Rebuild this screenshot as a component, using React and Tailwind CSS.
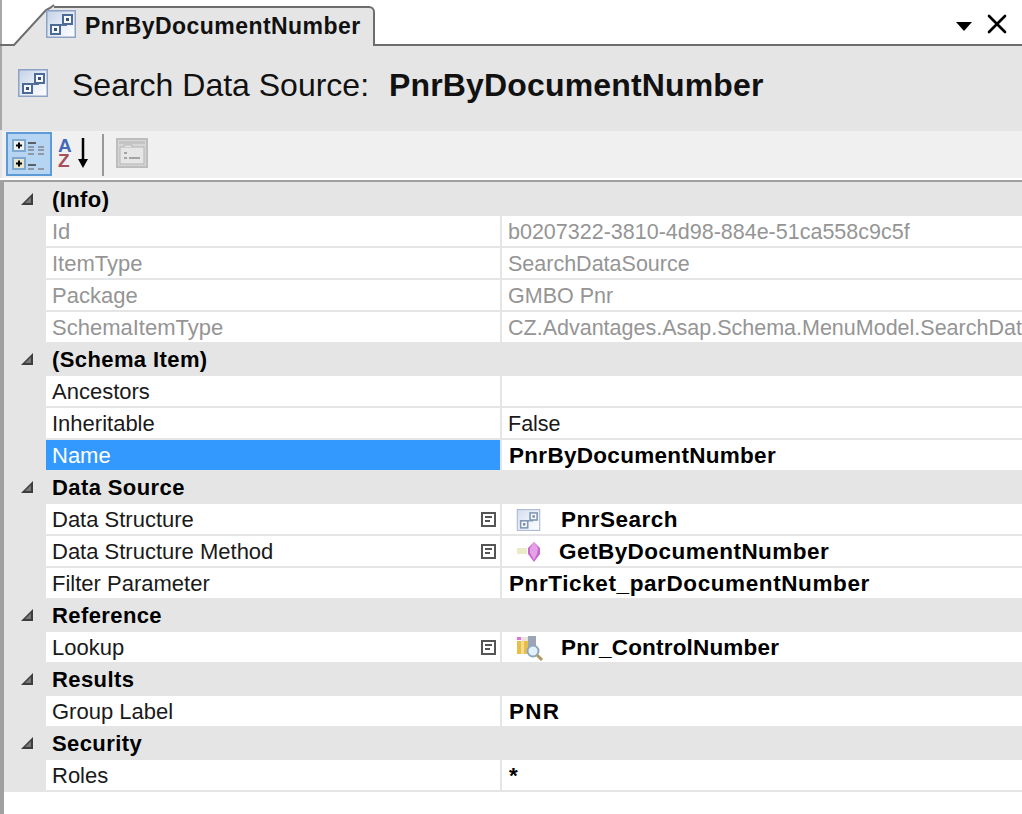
import { X } from 'lucide-react'

const SchemaIcon = ({ small = false }) => (
  <svg
    width={small ? 25 : 30}
    height={small ? 22 : 28}
    viewBox="0 0 30 28"
    className={small ? 'opacity-70 blur-[0.5px] flex-none' : 'flex-none'}
  >
    <defs>
      <linearGradient id="schemaBg" x1="0" y1="0" x2="1" y2="1">
        <stop offset="0" stopColor="#c3d1e6" />
        <stop offset="0.6" stopColor="#e9eff9" />
        <stop offset="1" stopColor="#ffffff" />
      </linearGradient>
    </defs>
    <rect x="0.75" y="0.75" width="28.5" height="26.5" fill="url(#schemaBg)" stroke="#8da2c4" strokeWidth="1.5" />
    <path d="M13 15h7v-2" fill="none" stroke="#5b769e" strokeWidth="2" />
    <rect x="17" y="5" width="9" height="9" fill="#f4f7fc" stroke="#4b6a96" strokeWidth="2" />
    <rect x="20" y="8" width="3" height="3" fill="#3a4f72" />
    <rect x="5" y="15" width="9" height="9" fill="#f4f7fc" stroke="#4b6a96" strokeWidth="2" />
    <rect x="8" y="18" width="3" height="3" fill="#3a4f72" />
  </svg>
)

const MethodIcon = () => (
  <svg width="26" height="22" viewBox="0 0 26 22" className="blur-[0.5px] flex-none">
    <rect x="1" y="7" width="10" height="6" fill="#ecebc8" />
    <path d="M18 1l6 6v6l-6 8-6-8V7z" fill="#c768cc" />
    <path d="M18 1l4 6-1 6-3 6-4-7 0-5z" fill="#e6a0e8" />
  </svg>
)

const LookupIcon = () => (
  <svg width="28" height="26" viewBox="0 0 28 26" className="blur-[0.5px] flex-none">
    <rect x="1" y="6" width="11" height="13" fill="#e9bd4a" />
    <rect x="5" y="6" width="3" height="13" fill="#f4dc8a" />
    <rect x="1" y="2" width="4" height="3" fill="#e070e0" />
    <rect x="5" y="2" width="7" height="4" fill="#e8e4d8" />
    <rect x="12" y="1" width="8" height="15" fill="#9aa5b6" />
    <circle cx="17" cy="16" r="5.5" fill="#e2f2fc" stroke="#8fa6bc" strokeWidth="2" />
    <path d="M21 20l5 5" stroke="#b09a60" strokeWidth="3" />
  </svg>
)

const CategorizedIcon = () => (
  <svg width="34" height="34" viewBox="0 0 34 34">
    <rect x="1" y="3" width="12" height="11" fill="#eef1f2" stroke="#7fa8d0" strokeWidth="2" />
    <path d="M7 5.5v6M4 8.5h6" stroke="#000" strokeWidth="2" />
    <rect x="1" y="21" width="12" height="11" fill="#e8e6cc" stroke="#7fa8d0" strokeWidth="2" />
    <path d="M7 23.5v6M4 26.5h6" stroke="#000" strokeWidth="2" />
    <path d="M16 6h8" stroke="#5b5f66" strokeWidth="2" />
    <path d="M16 10h6M26 10h6M16 13h6M26 13h6M16 17h6M26 17h6" stroke="#8f9aa8" strokeWidth="2" />
    <path d="M16 28h8" stroke="#5b5f66" strokeWidth="2" />
    <path d="M16 32h6M26 32h6" stroke="#8f9aa8" strokeWidth="2" />
  </svg>
)

const PagesIcon = () => (
  <svg width="32" height="30" viewBox="0 0 32 30" className="blur-[0.4px]">
    <rect x="1" y="1" width="30" height="28" fill="#d6d6d6" stroke="#bdbdbd" strokeWidth="2" />
    <rect x="3" y="3" width="26" height="3" fill="#c4c4c4" />
    <rect x="4" y="9" width="24" height="17" fill="#e6e6e6" stroke="#b4b4b4" />
    <path d="M8 9v-2h8v2" fill="#e6e6e6" stroke="#b4b4b4" />
    <path d="M8 15h3M8 20h3M13 20h11" stroke="#a4a4a4" strokeWidth="2" />
  </svg>
)

const Expander = () => (
  <span className="mr-[4px] w-[15px] h-[15px] border-2 border-[#555] flex flex-col items-start justify-center gap-[2px] pl-[2px]">
    <span className="w-[7px] h-[2px] bg-[#555]" />
    <span className="w-[5px] h-[2px] bg-[#555]" />
  </span>
)

const Row = ({ name, value, bold, dim, selected, expander, icon, gap = 'ml-[20px]', track = '' }) => (
  <div className="flex h-8 pl-[42px] bg-[#e5e5e5]">
    <div
      className={`flex-none w-[454px] h-[30px] pl-[6px] flex items-center justify-between ${
        selected ? 'bg-[#3399ff] text-white' : dim ? 'bg-white text-[#959595]' : 'bg-white text-[#1a1a1a]'
      }`}
    >
      <span>{name}</span>
      {expander && <Expander />}
    </div>
    <div
      className={`ml-[2px] flex-1 min-w-0 h-[30px] pt-[2px] flex items-center whitespace-nowrap overflow-hidden bg-white ${
        dim ? 'text-[#959595]' : 'text-[#1a1a1a]'
      } ${bold ? 'font-bold text-[22.5px] text-black' : 'text-[21.5px]'} ${
        icon ? 'pl-[14px]' : bold ? 'pl-[7px]' : 'pl-[6px]'
      } ${track}`}
    >
      {icon}
      {icon ? <span className={gap}>{value}</span> : value}
    </div>
  </div>
)

const Category = ({ title, children }) => (
  <>
    <div className="h-8 pb-[2px] flex items-center bg-[#e5e5e5] font-bold text-black tracking-[0.4px]">
      <svg width="14" height="14" viewBox="0 0 14 14" className="ml-[16px] mr-[18px] flex-none">
        <path d="M13 1v12H1z" fill="#3d3d3d" />
        <path d="M11 5v6H5z" fill="#777" />
      </svg>
      <span>{title}</span>
    </div>
    {children}
  </>
)

export default function App() {
  return (
    <div className="w-[1022px] h-[814px] overflow-hidden bg-white font-['Liberation_Sans',sans-serif] text-[22px]">
      {/* tab strip */}
      <div className="h-[46px] border-b-2 border-[#6d6d6d] relative">
        <div className="absolute left-0 top-0 w-[2px] h-[46px] bg-[#a8a8a8]" />
        <svg width="56" height="46" viewBox="0 0 56 46" className="absolute left-0 top-0">
          <path d="M14 45L46 10l4-2 4-2h2v40H14z" fill="#e5e5e5" />
          <path d="M0 45h14L46 10l4-2 4-3" fill="none" stroke="#6d6d6d" strokeWidth="2" />
        </svg>
        <div className="absolute left-[54px] top-[6px] w-[321px] h-[40px] bg-[#e5e5e5] border-t-2 border-r-2 border-[#6d6d6d] rounded-tr-[6px] flex items-start pt-[2px] font-bold">
          <div className="-ml-[8px]"><SchemaIcon /></div>
          <span className="ml-[9px] leading-[32px] text-[23px] tracking-[0.45px] text-[#111]">PnrByDocumentNumber</span>
        </div>
        <svg width="16" height="9" viewBox="0 0 16 9" className="absolute left-[956px] top-[22px]">
          <path d="M0 0h16l-8 9z" fill="#000" />
        </svg>
        <X className="absolute left-[981px] top-[8px] text-black" size={32} strokeWidth={2} />
      </div>

      {/* title */}
      <div className="h-[84px] bg-[#e5e5e5] flex items-center pl-[18px] pb-[6px] border-l-2 border-[#a8a8a8]">
        <div className="-ml-[2px] -mt-[4px]"><SchemaIcon /></div>
        <span className="ml-[24px] text-[32px] text-[#111]">Search Data Source:</span>
        <span className="ml-[20px] text-[32px] font-bold tracking-[0.15px] text-[#111]">PnrByDocumentNumber</span>
      </div>

      {/* toolbar */}
      <div className="h-[48px] bg-[#e5e5e5] pl-[2px] pt-px">
        <div className="h-[47px] bg-[#f0f0f0] flex items-start pt-px pl-[4px]">
          <div className="w-[46px] h-[44px] bg-[#b5d5f3] border-2 border-[#5d9bd8] flex items-center justify-center">
            <CategorizedIcon />
          </div>
          <div className="ml-[6px] mt-[6px] relative w-[44px] h-[34px] flex flex-col text-[19px] leading-[15px] font-bold items-start">
            <span className="text-[#4468b8]">A</span>
            <span className="text-[#a8505a]">Z</span>
            <svg width="16" height="32" viewBox="0 0 16 32" className="absolute left-[17px] top-0">
              <path d="M8 0v26" stroke="#000" strokeWidth="2.5" />
              <path d="M3 21h10l-5 9z" fill="#000" />
            </svg>
          </div>
          <div className="mt-[2px] w-[2px] h-[42px] bg-[#999]" />
          <div className="ml-[12px] mt-[6px]"><PagesIcon /></div>
        </div>
      </div>
      <div className="h-[2px] bg-white" />
      <div className="h-[2px] bg-[#a0a0a0]" />

      {/* property grid */}
      <div className="border-l-4 border-[#a0a0a0] h-[632px]">
        <div className="h-[2px] bg-[#e5e5e5]" />
        <Category title="(Info)">
          <Row name="Id" value="b0207322-3810-4d98-884e-51ca558c9c5f" dim />
          <Row name="ItemType" value="SearchDataSource" dim />
          <Row name="Package" value="GMBO Pnr" dim />
          <Row name="SchemaItemType" value="CZ.Advantages.Asap.Schema.MenuModel.SearchDataSource" dim />
        </Category>
        <Category title="(Schema Item)">
          <Row name="Ancestors" value="" />
          <Row name="Inheritable" value="False" />
          <Row name="Name" value="PnrByDocumentNumber" bold selected track="tracking-[0.3px]" />
        </Category>
        <Category title="Data Source">
          <Row name="Data Structure" value="PnrSearch" bold expander icon={<SchemaIcon small />} track="tracking-[0.49px]" />
          <Row name="Data Structure Method" value="GetByDocumentNumber" bold expander icon={<MethodIcon />} gap="ml-[17px]" track="tracking-[0.47px]" />
          <Row name="Filter Parameter" value="PnrTicket_parDocumentNumber" bold track="tracking-[0.6px]" />
        </Category>
        <Category title="Reference">
          <Row name="Lookup" value="Pnr_ControlNumber" bold expander icon={<LookupIcon />} gap="ml-[17px]" track="tracking-[0.18px]" />
        </Category>
        <Category title="Results">
          <Row name="Group Label" value="PNR" bold track="tracking-[1.3px]" />
        </Category>
        <Category title="Security">
          <Row name="Roles" value="*" bold />
        </Category>
      </div>
    </div>
  )
}
